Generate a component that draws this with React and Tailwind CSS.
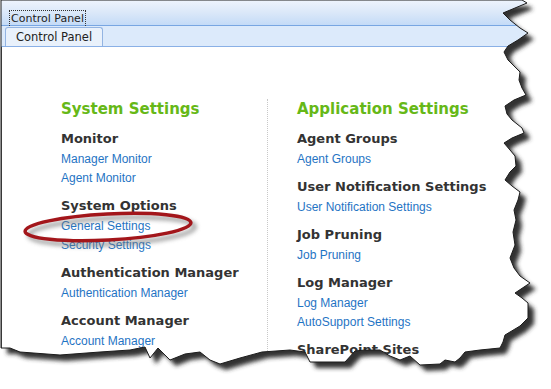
import React from "react";

const left = [
  { title: "Monitor", links: ["Manager Monitor", "Agent Monitor"] },
  { title: "System Options", links: ["General Settings", "Security Settings"] },
  { title: "Authentication Manager", links: ["Authentication Manager"] },
  { title: "Account Manager", links: ["Account Manager"] },
];

const right = [
  { title: "Agent Groups", links: ["Agent Groups"] },
  { title: "User Notification Settings", links: ["User Notification Settings"] },
  { title: "Job Pruning", links: ["Job Pruning"] },
  { title: "Log Manager", links: ["Log Manager", "AutoSupport Settings"] },
  { title: "SharePoint Sites", links: [] },
];

// torn edge outline of the screenshot, clockwise from top-left
const torn = [
  [1, 0], [522, 0], [527, 3], [515, 8], [503, 13], [510, 20], [520, 28], [528, 33],
  [518, 40], [508, 46], [504, 52], [508, 60], [514, 66], [520, 72], [519, 80],
  [522, 88], [526, 95], [514, 100], [505, 106], [507, 114], [512, 120], [522, 128],
  [524, 133], [512, 138], [504, 143], [510, 150], [515, 156], [516, 166], [510, 172],
  [505, 180], [512, 186], [520, 192], [518, 200], [514, 210], [516, 220], [513, 232],
  [515, 245], [510, 258], [514, 268], [520, 276], [530, 283], [515, 293], [522, 298],
  [528, 303], [528, 318], [520, 326], [505, 335], [503, 342], [500, 348], [480, 350],
  [465, 352], [460, 358], [455, 362], [445, 360], [440, 364], [420, 365], [410, 356],
  [400, 360], [390, 356], [380, 350], [365, 350], [355, 351], [345, 362], [310, 362],
  [305, 352], [290, 350], [262, 352], [240, 358], [220, 364], [210, 360], [200, 352],
  [185, 354], [170, 360], [158, 348], [150, 358], [145, 347], [130, 350], [100, 352],
  [60, 355], [20, 352], [10, 348], [1, 348],
];
const tornPath = "M" + torn.map((p) => p.join(" ")).join("L") + "Z";
const outside = "M0 0H551V389H0Z" + tornPath;

function Column({ heading, groups }) {
  return (
    <div>
      <h2 className="text-[15px] leading-[20px] font-bold text-[#66b817]">{heading}</h2>
      <div className="mt-[9px]">
        {groups.map((g) => (
          <div key={g.title} className="mb-[7px]">
            <h3 className="text-[13px] leading-[22px] font-bold text-[#333]">{g.title}</h3>
            {g.links.map((l) => (
              <a
                key={l}
                className="block text-[12px] leading-[19px] text-[#1f74c4] font-['Liberation_Sans',Arial,sans-serif]"
              >
                {l}
              </a>
            ))}
          </div>
        ))}
      </div>
    </div>
  );
}

export default function App() {
  return (
    <div className="relative w-[551px] h-[389px] overflow-hidden bg-white font-['DejaVu_Sans',Verdana,sans-serif]">
      <div className="h-[26px] bg-gradient-to-b from-[#eef4fd] via-[#dbe8f9] to-[#c4dbf7] border-b border-[#78a6e2] pl-[9px] pt-[5px]">
        <span className="inline-block border border-dotted border-[#333] px-[1px] text-[11px] leading-[16px] text-[#222]">
          Control Panel
        </span>
      </div>
      <div className="h-[21px] bg-[#dceafb] border-b border-[#8ab0e6] flex items-end pl-[5px]">
        <div className="h-[19px] w-[98px] bg-[#e9f1fb] border border-b-0 border-[#93b4e2] rounded-t-[3px] text-[11.5px] leading-[18px] text-[#222] text-center">
          Control Panel
        </div>
      </div>
      <div className="h-[342px] border-l-2 border-[#555] flex pl-[59px] pt-[52px]">
        <div className="w-[206px]">
          <Column heading="System Settings" groups={left} />
        </div>
        <div className="border-l border-dotted border-[#c8c8c8] pl-[29px] self-stretch">
          <Column heading="Application Settings" groups={right} />
        </div>
      </div>

      <svg className="absolute left-0 top-0 pointer-events-none" width="551" height="389">
        <defs>
          <filter id="blur" x="-10%" y="-10%" width="120%" height="120%">
            <feGaussianBlur stdDeviation="2.2" />
          </filter>
          <filter id="eblur" x="-20%" y="-50%" width="140%" height="200%">
            <feGaussianBlur stdDeviation="2" />
          </filter>
          <clipPath id="outside">
            <path clipRule="evenodd" d={outside} />
          </clipPath>
        </defs>
        <ellipse cx="112" cy="231" rx="83" ry="13" fill="none" stroke="#777" strokeWidth="4" filter="url(#eblur)" opacity="0.7" transform="rotate(-3 112 231)" />
        <ellipse cx="108" cy="227" rx="83" ry="13" fill="none" stroke="#a3161b" strokeWidth="3.5" transform="rotate(-3 108 227)" />
        <path fill="#fff" fillRule="evenodd" d={outside} />
        <g clipPath="url(#outside)">
          <path d={tornPath} transform="translate(6 6)" fill="#333" filter="url(#blur)" />
        </g>
        <path d={tornPath} fill="none" stroke="#1c1c1c" strokeWidth="1" />
      </svg>
    </div>
  );
}
